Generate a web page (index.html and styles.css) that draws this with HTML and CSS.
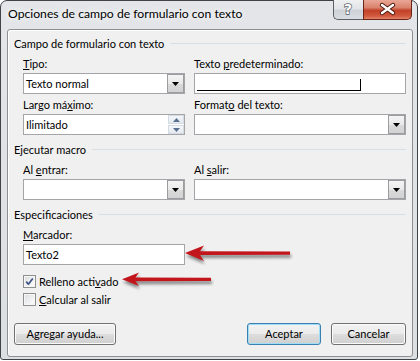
FILE: index.html
```html
<!DOCTYPE html>
<html lang="es">
<head>
<meta charset="utf-8">
<title>Opciones de campo de formulario con texto</title>
<link rel="stylesheet" href="styles.css">
</head>
<body>
<div class="window">
  <div class="titlebar">
    <div class="title">Opciones de campo de formulario con texto</div>
    <div class="caption-buttons">
      <div class="cap-btn help">
        <svg width="30" height="20" viewBox="0 0 30 20"><text x="15" y="15" text-anchor="middle" class="help-glyph">?</text></svg>
      </div>
      <div class="cap-btn close">
        <svg width="49" height="20" viewBox="0 0 49 20">
          <path d="M19 6 L30 14 M30 6 L19 14" class="x-outline"/>
          <path d="M19 6 L30 14 M30 6 L19 14" class="x-fill"/>
        </svg>
      </div>
    </div>
  </div>
  <div class="client">
    <div class="group-head"><span>Campo de formulario con texto</span></div>
    <div class="grid">
      <div class="field">
        <div class="label"><u>T</u>ipo:</div>
        <div class="control combo"><span class="value">Texto normal</span><span class="drop"><svg width="7" height="4" viewBox="0 0 7 4"><polygon points="0,0 7,0 3.5,4" fill="#000"/></svg></span></div>
      </div>
      <div class="field">
        <div class="label">Texto <u>p</u>redeterminado:</div>
        <div class="control textbox"><span class="default-mark"></span></div>
      </div>
      <div class="field">
        <div class="label">Largo má<u>x</u>imo:</div>
        <div class="control spin"><span class="value">Ilimitado</span><span class="spin-btns"><span class="spin-btn"><svg width="7" height="4" viewBox="0 0 7 4"><polygon points="0,4 7,4 3.5,0" fill="#5a6e92"/></svg></span><span class="spin-btn"><svg width="7" height="4" viewBox="0 0 7 4"><polygon points="0,0 7,0 3.5,4" fill="#5a6e92"/></svg></span></span></div>
      </div>
      <div class="field">
        <div class="label">Format<u>o</u> del texto:</div>
        <div class="control combo"><span class="value"></span><span class="drop"><svg width="7" height="4" viewBox="0 0 7 4"><polygon points="0,0 7,0 3.5,4" fill="#000"/></svg></span></div>
      </div>
    </div>

    <div class="group-head gap"><span>Ejecutar macro</span></div>
    <div class="grid">
      <div class="field">
        <div class="label">Al <u>e</u>ntrar:</div>
        <div class="control combo"><span class="value"></span><span class="drop"><svg width="7" height="4" viewBox="0 0 7 4"><polygon points="0,0 7,0 3.5,4" fill="#000"/></svg></span></div>
      </div>
      <div class="field">
        <div class="label">Al <u>s</u>alir:</div>
        <div class="control combo"><span class="value"></span><span class="drop"><svg width="7" height="4" viewBox="0 0 7 4"><polygon points="0,0 7,0 3.5,4" fill="#000"/></svg></span></div>
      </div>
    </div>

    <div class="group-head gap"><span>Especificaciones</span></div>
    <div class="grid">
      <div class="field">
        <div class="label"><u>M</u>arcador:</div>
        <div class="control textbox marker"><span class="value">Texto2</span></div>
      </div>
    </div>

    <div class="checks">
      <div class="check">
        <span class="box"><svg width="11" height="11" viewBox="0 0 11 11"><path d="M2.2 5.6 L4.4 8.2 L8.8 2.4" class="tick"/></svg></span>
        <span>Relleno acti<u>v</u>ado</span>
      </div>
      <div class="check">
        <span class="box"></span>
        <span><u>C</u>alcular al salir</span>
      </div>
    </div>

    <div class="buttons">
      <div class="btn help-btn">A<u>g</u>regar ayuda...</div>
      <div class="spacer"></div>
      <div class="btn default">Aceptar</div>
      <div class="btn">Cancelar</div>
    </div>
  </div>

  <svg class="annotations" width="420" height="361" viewBox="0 0 420 361">
    <g class="arrow">
      <polygon points="185,253 204,245.5 200,251.2 290,251.4 290,254.8 200,255 204,261"/>
    </g>
    <g class="arrow">
      <polygon points="122,279.3 139,272.5 135.5,277.6 211,277.8 211,281 135.5,281.2 139,286"/>
    </g>
  </svg>
</div>
</body>
</html>
```

FILE: styles.css
```css
* { box-sizing: border-box; }

html, body {
  margin: 0;
  padding: 0;
}

body {
  width: 420px;
  height: 361px;
  overflow: hidden;
  background: #ffffff;
  font-family: "Lato", "Liberation Sans", sans-serif;
  font-size: 11px;
  color: #000;
}

u { text-decoration: underline; text-underline-offset: 1px; }

.window {
  position: relative;
  width: 418px;
  height: 360px;
  border: 1px solid #3f4246;
  border-radius: 7px 7px 3px 3px;
  background: linear-gradient(180deg, #e3e5e8 0%, #dcdfe2 100%);
  padding: 0 4px 2px 6px;
  display: flex;
  flex-direction: column;
}

/* title bar */
.titlebar {
  height: 28px;
  flex: none;
  display: flex;
  justify-content: space-between;
  align-items: flex-start;
}

.title {
  padding: 4px 0 0 1px;
  font-size: 12.2px;
  line-height: 18px;
  color: #000;
  text-shadow: 0 0 5px #ffffff, 0 0 8px #ffffff;
}

.caption-buttons {
  display: flex;
  margin-top: -1px;
  margin-right: 1px;
}

.cap-btn {
  height: 20px;
  border: 1px solid #5b5f66;
  border-top: none;
}

.cap-btn svg { display: block; margin: -1px 0 0 -1px; }

.help {
  width: 30px;
  border-right: none;
  border-radius: 0 0 0 5px;
  background: linear-gradient(180deg, #eef0f2 0%, #e2e4e7 45%, #cfd3d8 55%, #d9dde1 100%);
}

.help-glyph {
  font-family: "DejaVu Sans", sans-serif;
  font-size: 14px;
  font-weight: bold;
  fill: #ffffff;
  stroke: #5a5e66;
  stroke-width: 1.4px;
  paint-order: stroke;
}

.close {
  width: 49px;
  border-radius: 0 0 5px 0;
  border-color: #6a2418;
  background: linear-gradient(180deg, #e9a796 0%, #d9826c 40%, #c24128 55%, #d25a3f 85%, #e0866a 100%);
}

.x-outline {
  stroke: #4e1a12;
  stroke-width: 4.4px;
  stroke-linecap: round;
  fill: none;
}

.x-fill {
  stroke: #ffffff;
  stroke-width: 2.4px;
  stroke-linecap: round;
  fill: none;
}

/* client area */
.client {
  position: relative;
  flex: 1;
  border: 1px solid #8e9194;
  border-radius: 3px;
  background: #f0f0f0;
  box-shadow: inset 1px 1px 0 #ffffff;
  padding: 6px 6px 0 6px;
}

.group-head {
  display: flex;
  align-items: center;
  height: 15px;
  line-height: 15px;
  white-space: nowrap;
}

.group-head::after {
  content: "";
  flex: 1;
  height: 1px;
  margin-left: 6px;
  background: #d5dfe5;
}

.group-head.gap { margin-top: 7px; }

.grid {
  display: grid;
  grid-template-columns: 162px 212px;
  column-gap: 9px;
  row-gap: 3px;
  margin: 5px 0 0 9px;
}

.label {
  height: 15px;
  line-height: 15px;
  margin-bottom: 2px;
  white-space: nowrap;
}

.control {
  height: 21px;
  border: 1px solid #a3a5a8;
  background: #ffffff;
  display: flex;
  align-items: center;
}

.value {
  padding-left: 2px;
  flex: 1;
  line-height: 15px;
}

.drop {
  width: 17px;
  height: 19px;
  flex: none;
  border: 1px solid #9a9c9f;
  background: linear-gradient(180deg, #f4f4f4 0%, #e9e9e9 50%, #dadada 51%, #d2d2d2 100%);
  display: flex;
  align-items: center;
  justify-content: center;
}

.drop svg { display: block; margin-top: 1px; }

.spin-btns {
  width: 16px;
  height: 19px;
  flex: none;
  display: flex;
  flex-direction: column;
  gap: 1px;
}

.spin-btn {
  flex: 1;
  border: 1px solid #d4dbe2;
  background: linear-gradient(180deg, #f4f7fa 0%, #e3e9ef 100%);
  display: flex;
  align-items: center;
  justify-content: center;
}

.spin-btn svg { display: block; }

.default-mark {
  display: block;
  width: 164px;
  height: 12px;
  margin: 2px 0 0 2px;
  border-bottom: 1px solid #000;
  border-right: 1px solid #000;
}

/* checkboxes */
.checks {
  margin: 9px 0 0 9px;
  display: flex;
  flex-direction: column;
  gap: 3px;
}

.check {
  display: flex;
  align-items: center;
  gap: 3px;
  height: 15px;
  line-height: 15px;
}

.box {
  width: 13px;
  height: 13px;
  flex: none;
  border: 1px solid #8e8f8f;
  background: linear-gradient(135deg, #dadcdf 0%, #f1f2f3 60%, #fdfdfd 100%);
  box-shadow: inset 0 0 0 1px #f6f6f6;
}

.box svg { display: block; }

.tick {
  fill: none;
  stroke: #3f5385;
  stroke-width: 1.7px;
  stroke-linejoin: round;
}

/* buttons */
.buttons {
  display: flex;
  gap: 10px;
  margin-top: 16px;
}

.spacer { flex: 1; }

.btn {
  height: 22px;
  line-height: 20px;
  text-align: center;
  border: 1px solid #707070;
  border-radius: 3px;
  background: linear-gradient(180deg, #f2f2f2 0%, #ebebeb 48%, #dddddd 52%, #cfcfcf 100%);
  box-shadow: inset 0 0 0 1px #fbfbfb;
  width: 75px;
}

.btn.help-btn { width: 102px; }

.btn.default {
  width: 74px;
  border-color: #3c7fb1;
  box-shadow: inset 0 0 0 1px #9fdcf6;
}

/* annotations */
.annotations {
  position: absolute;
  left: -1px;
  top: -1px;
  pointer-events: none;
}

.arrow {
  fill: #c3161c;
  filter: drop-shadow(1px 3px 1.5px rgba(0, 0, 0, 0.45));
}
```
